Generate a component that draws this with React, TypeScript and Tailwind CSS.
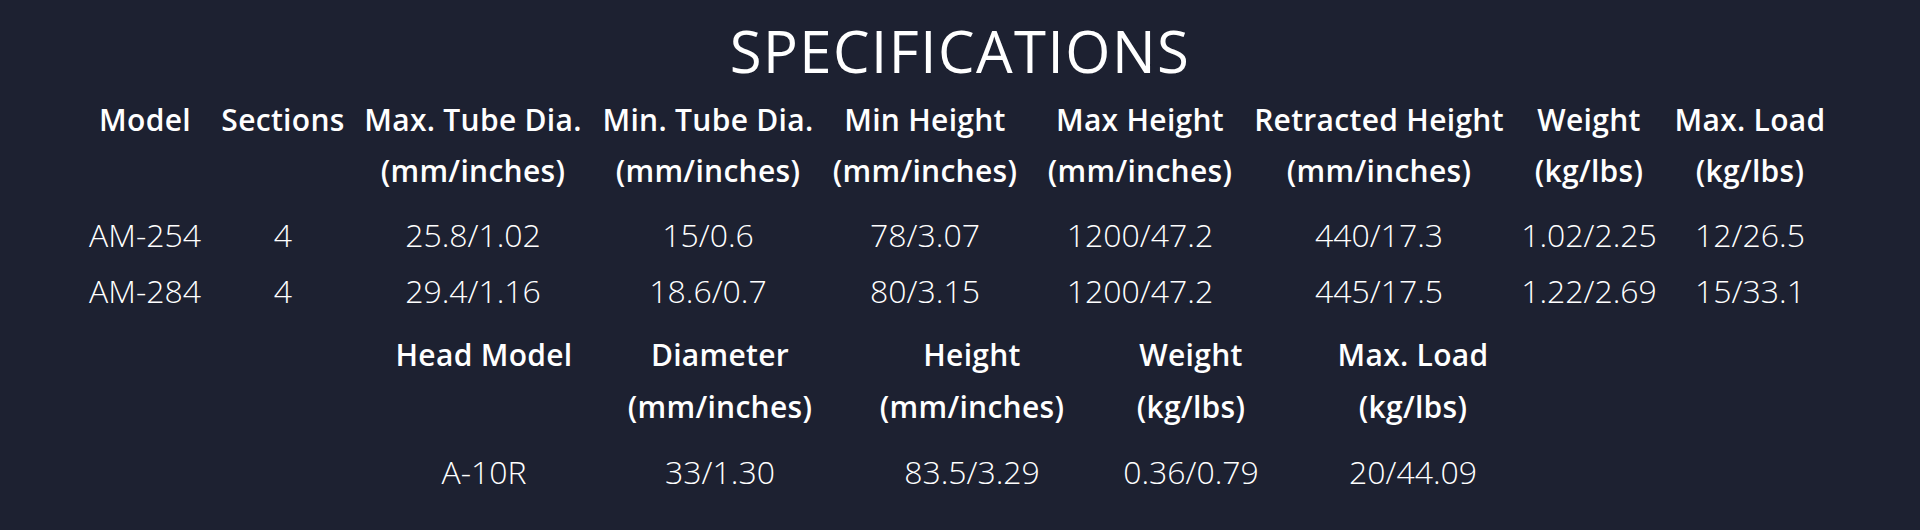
import React from "react";

const mainCols = [
  { title: "Model" },
  { title: "Sections" },
  { title: "Max. Tube Dia.", unit: "(mm/inches)" },
  { title: "Min. Tube Dia.", unit: "(mm/inches)" },
  { title: "Min Height", unit: "(mm/inches)" },
  { title: "Max Height", unit: "(mm/inches)" },
  { title: "Retracted Height", unit: "(mm/inches)" },
  { title: "Weight", unit: "(kg/lbs)" },
  { title: "Max. Load", unit: "(kg/lbs)" },
];

const mainRows = [
  ["AM-254", "4", "25.8/1.02", "15/0.6", "78/3.07", "1200/47.2", "440/17.3", "1.02/2.25", "12/26.5"],
  ["AM-284", "4", "29.4/1.16", "18.6/0.7", "80/3.15", "1200/47.2", "445/17.5", "1.22/2.69", "15/33.1"],
];

const headCols = [
  { title: "Head Model" },
  { title: "Diameter", unit: "(mm/inches)" },
  { title: "Height", unit: "(mm/inches)" },
  { title: "Weight", unit: "(kg/lbs)" },
  { title: "Max. Load", unit: "(kg/lbs)" },
];

const headRow = ["A-10R", "33/1.30", "83.5/3.29", "0.36/0.79", "20/44.09"];

type Col = { title: string; unit?: string };

function HeaderCell({ col, lh }: { col: Col; lh: string }) {
  return (
    <div className={`flex flex-col items-center whitespace-nowrap text-[30px] font-semibold tracking-[0.3px] text-white ${lh}`}>
      <span>{col.title}</span>
      {col.unit && <span>{col.unit}</span>}
    </div>
  );
}

function ValueCell({ value }: { value: string }) {
  return (
    <div className="whitespace-nowrap text-center text-[32px] font-light leading-[56px] text-white">
      {value}
    </div>
  );
}

export default function App() {
  return (
    <div className="h-[530px] w-full overflow-hidden bg-[#1d2131] font-['Open_Sans','Liberation_Sans',sans-serif]">
      {/* Title */}
      <h2 className="pt-[19px] text-center text-[58px] font-normal leading-[64px] tracking-[1.5px] text-white">
        SPECIFICATIONS
      </h2>

      {/* Main tube table */}
      <div className="mt-[11px] pl-[85px]">
        <div className="grid grid-cols-[120px_156px_224px_246px_188px_242px_236px_184px_138px] justify-items-center">
          {mainCols.map((col) => (
            <HeaderCell key={col.title} col={col} lh="leading-[51px]" />
          ))}
        </div>
        <div className="mt-[11px] grid grid-cols-[120px_156px_224px_246px_188px_242px_236px_184px_138px] justify-items-center">
          {mainRows.map((row) =>
            row.map((v, i) => <ValueCell key={row[0] + i} value={v} />)
          )}
        </div>
      </div>

      {/* Head table */}
      <div className="mt-[10px] pl-[380px]">
        <div className="grid grid-cols-[208px_264px_240px_198px_246px] justify-items-center">
          {headCols.map((col) => (
            <HeaderCell key={col.title} col={col} lh="leading-[52px]" />
          ))}
        </div>
        <div className="mt-[11px] grid grid-cols-[208px_264px_240px_198px_246px] justify-items-center">
          {headRow.map((v, i) => (
            <ValueCell key={i} value={v} />
          ))}
        </div>
      </div>
    </div>
  );
}
